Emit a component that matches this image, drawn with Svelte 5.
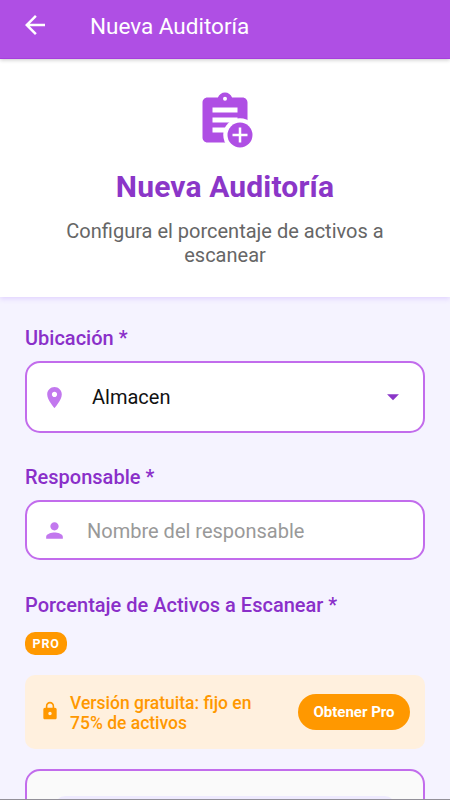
<script>
  let location = "Almacen";
  let responsible = "";
</script>

<style>
  :global(body) {
    overflow: hidden;
  }
  .screen {
    height: 800px;
    display: flex;
    flex-direction: column;
    overflow: hidden;
    background: #f5f3ff;
    font-family: Roboto, "Liberation Sans", sans-serif;
    border-bottom: 1px solid #929098;
    box-sizing: border-box;
  }
  svg {
    display: block;
    flex-shrink: 0;
    fill: currentColor;
  }
  .topbar {
    height: 59px;
    flex-shrink: 0;
    box-sizing: border-box;
    display: flex;
    align-items: center;
    padding: 0 20px 9px;
    gap: 40px;
    background: #af4fe4;
    border-bottom: 1px solid #a63fdd;
    color: white;
    z-index: 2;
    box-shadow: 0 1px 4px rgba(0, 0, 0, 0.22);
  }
  .topbar span {
    font-size: 22.5px;
    line-height: 28px;
    padding-top: 2px;
  }
  .hero {
    height: 238px;
    flex-shrink: 0;
    box-sizing: border-box;
    padding: 31px 40px 0;
    display: flex;
    flex-direction: column;
    align-items: center;
    background: white;
    color: #af4fe4;
    text-align: center;
    box-shadow: 0 2px 5px rgba(150, 90, 255, 0.2);
  }
  h1 {
    margin: 19px 0 0;
    font-size: 30px;
    line-height: 36px;
    font-weight: 700;
    letter-spacing: 0.15px;
    color: #8b36c8;
  }
  .hero p {
    margin: 14px 0 0;
    font-size: 20px;
    line-height: 24px;
    color: #666;
  }
  .form {
    padding: 29px 25px 0;
    display: flex;
    flex-direction: column;
  }
  .label {
    font-size: 20px;
    line-height: 24px;
    font-weight: 500;
    color: #8a2fc9;
    margin-bottom: 11px;
  }
  .field {
    box-sizing: border-box;
    display: flex;
    align-items: center;
    border: 2px solid #c26cec;
    border-radius: 15px;
    background: white;
    color: #c278ee;
    padding: 0 17px 0 15px;
  }
  .select {
    height: 72px;
    margin-bottom: 32px;
    gap: 25px;
  }
  .select span {
    flex: 1;
    font-size: 20px;
    color: #111;
  }
  .arrow {
    color: #8b36c8;
  }
  .input {
    height: 60px;
    margin-bottom: 33px;
    gap: 20px;
  }
  .input input {
    flex: 1;
    min-width: 0;
    border: none;
    outline: none;
    padding: 2px 0 0;
    background: none;
    font: 20px Roboto, "Liberation Sans", sans-serif;
  }
  .input input::placeholder {
    color: #999;
    opacity: 1;
  }
  .badge {
    align-self: flex-start;
    height: 23px;
    padding: 0 7px 0 7.5px;
    margin: 4px 0 20px;
    border-radius: 10px;
    background: #ff9800;
    color: white;
    font-size: 12.5px;
    line-height: 24px;
    font-weight: 700;
    letter-spacing: 0.9px;
  }
  .notice {
    height: 74px;
    box-sizing: border-box;
    display: flex;
    align-items: center;
    padding: 0 15px;
    border-radius: 10px;
    background: #fff0de;
    color: #ff9800;
  }
  .notice svg {
    margin-bottom: 2px;
  }
  .notice p {
    flex: 1;
    margin: 2px 0 0 10px;
    font-size: 17.5px;
    line-height: 20.5px;
    font-weight: 500;
  }
  .notice button {
    width: 112px;
    height: 36px;
    flex-shrink: 0;
    border: none;
    padding: 0;
    border-radius: 18px;
    background: #ff9800;
    color: white;
    font: 700 15px Roboto, "Liberation Sans", sans-serif;
  }
  .card {
    height: 120px;
    box-sizing: border-box;
    margin-top: 20px;
    padding: 25px 28px;
    border: 2px solid #c26cec;
    border-radius: 15px;
    background: #fafafa;
  }
  .track {
    height: 60px;
    border-radius: 10px;
    background: #eeeafe;
  }
</style>

<div class="screen">
  <div class="topbar">
    <svg width="30" height="30" viewBox="0 0 24 24"><path d="M20 11H7.83l5.59-5.59L12 4l-8 8 8 8 1.41-1.41L7.83 13H20v-2z" /></svg>
    <span>Nueva Auditoría</span>
  </div>

  <div class="hero">
    <svg width="60" height="60" viewBox="0 0 24 24">
      <path d="M19 3h-4.18C14.4 1.84 13.3 1 12 1s-2.4.84-2.82 2H5c-1.1 0-2 .9-2 2v14c0 1.1.9 2 2 2h14c1.1 0 2-.9 2-2V5c0-1.1-.9-2-2-2z" />
      <g fill="white">
        <circle cx="12" cy="3.5" r=".8" />
        <path d="M7 7h10v2H7zM7 11h10v2H7zM7 15h7v2H7z" />
        <circle cx="18" cy="18" r="6.7" />
      </g>
      <circle cx="18" cy="18" r="5" />
      <path fill="white" d="M17.5 15h1v2.5H21v1h-2.5V21h-1v-2.5H15v-1h2.5z" />
    </svg>
    <h1>Nueva Auditoría</h1>
    <p>Configura el porcentaje de activos a escanear</p>
  </div>

  <div class="form">
    <div class="label">Ubicación *</div>
    <div class="field select">
      <svg width="25" height="25" viewBox="0 0 24 24"><path d="M12 2C8.13 2 5 5.13 5 9c0 5.25 7 13 7 13s7-7.75 7-13c0-3.87-3.13-7-7-7zm0 9.5c-1.38 0-2.5-1.12-2.5-2.5s1.12-2.5 2.5-2.5 2.5 1.12 2.5 2.5-1.12 2.5-2.5 2.5z" /></svg>
      <span>{location}</span>
      <svg class="arrow" width="26" height="26" viewBox="0 0 24 24"><path d="M6.5 9.5l5.5 5.5 5.5-5.5z" /></svg>
    </div>

    <div class="label">Responsable *</div>
    <div class="field input">
      <svg width="25" height="25" viewBox="0 0 24 24"><path d="M12 12c2.21 0 4-1.79 4-4s-1.79-4-4-4-4 1.79-4 4 1.79 4 4 4zm0 2c-2.67 0-8 1.34-8 4v2h16v-2c0-2.66-5.33-4-8-4z" /></svg>
      <input placeholder="Nombre del responsable" bind:value={responsible} />
    </div>

    <div class="label">Porcentaje de Activos a Escanear *</div>
    <div class="badge">PRO</div>

    <div class="notice">
      <svg width="20" height="20" viewBox="0 0 24 24"><path d="M18 8h-1V6c0-2.76-2.24-5-5-5S7 3.24 7 6v2H6c-1.1 0-2 .9-2 2v10c0 1.1.9 2 2 2h12c1.1 0 2-.9 2-2V10c0-1.1-.9-2-2-2zm-6 9c-1.1 0-2-.9-2-2s.9-2 2-2 2 .9 2 2-.9 2-2 2zm3.1-9H8.9V6c0-1.71 1.39-3.1 3.1-3.1 1.71 0 3.1 1.39 3.1 3.1v2z" /></svg>
      <p>Versión gratuita: fijo en<br />75% de activos</p>
      <button>Obtener Pro</button>
    </div>

    <div class="card">
      <div class="track"></div>
    </div>
  </div>
</div>
